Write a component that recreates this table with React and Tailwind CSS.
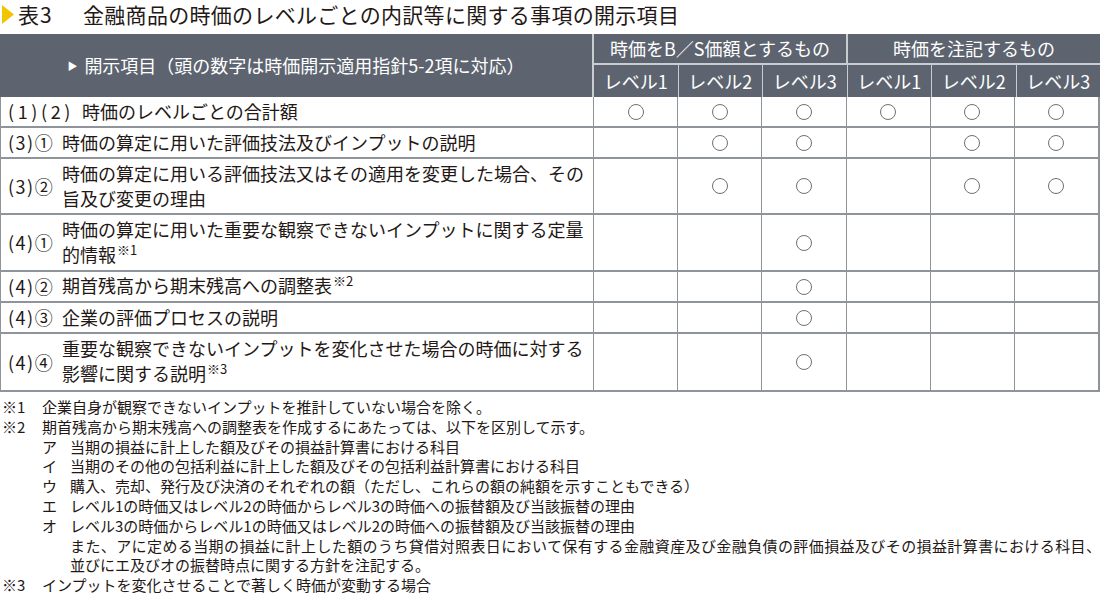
import React from "react";

const FONT = { fontFamily: '"Noto Sans CJK JP", "Noto Sans", sans-serif' };

const Circle = () => (
  <div className="w-[16px] h-[16px] rounded-full border border-[#707070]" />
);

const rows = [
  { p: "(1)(2)", pw: "w-[74px]", tr: "tracking-[3.6px]", lines: ["時価のレベルごとの合計額"], c: [1, 1, 1, 1, 1, 1], h: "h-[31px]" },
  { p: "(3)①", pw: "w-[54px]", tr: "tracking-[1.5px]", lines: ["時価の算定に用いた評価技法及びインプットの説明"], c: [0, 1, 1, 0, 1, 1], h: "h-[31px]" },
  {
    p: "(3)②",
    pw: "w-[54px]",
    tr: "tracking-[1.5px]",
    lines: ["時価の算定に用いる評価技法又はその適用を変更した場合、その", "旨及び変更の理由"],
    c: [0, 1, 1, 0, 1, 1],
    h: "h-[56px]",
  },
  {
    p: "(4)①",
    pw: "w-[54px]",
    tr: "tracking-[1.5px]",
    lines: ["時価の算定に用いた重要な観察できないインプットに関する定量", "的情報"],
    sup: "※1",
    c: [0, 0, 1, 0, 0, 0],
    h: "h-[57px]",
  },
  { p: "(4)②", pw: "w-[54px]", tr: "tracking-[1.5px]", lines: ["期首残高から期末残高への調整表"], sup: "※2", c: [0, 0, 1, 0, 0, 0], h: "h-[31px]" },
  { p: "(4)③", pw: "w-[54px]", tr: "tracking-[1.5px]", lines: ["企業の評価プロセスの説明"], c: [0, 0, 1, 0, 0, 0], h: "h-[31px]" },
  {
    p: "(4)④",
    pw: "w-[54px]",
    tr: "tracking-[1.5px]",
    lines: ["重要な観察できないインプットを変化させた場合の時価に対する", "影響に関する説明"],
    sup: "※3",
    c: [0, 0, 1, 0, 0, 0],
    h: "h-[58px]",
  },
];

const levels = ["レベル1", "レベル2", "レベル3", "レベル1", "レベル2", "レベル3"];

export default function App() {
  return (
    <div className="w-[1100px] h-[595px] bg-white overflow-hidden text-[#231815]" style={FONT}>
      {/* Title */}
      <div className="flex items-center pl-[2px]">
        <svg width="12" height="19" viewBox="0 0 12 19" className="shrink-0">
          <polygon points="0,0 12,9.5 0,19" fill="#f5c400" />
        </svg>
        <span className="ml-[4px] w-[65px] text-[21px] leading-[28px] tracking-[1px]">表3</span>
        <span className="text-[21px] leading-[28px] tracking-[0.3px]">
          金融商品の時価のレベルごとの内訳等に関する事項の開示項目
        </span>
      </div>

      {/* Table */}
      <div className="mt-[6px] w-[1100px]">
        {/* Header */}
        <div className="flex h-[63px] bg-[#5d6470] text-white">
          <div className="w-[594px] shrink-0 flex items-center justify-center border-r-2 border-[#c9ccd1] text-[18px]">
            <span className="text-[10px] mr-[7px]">▶</span>
            <span>開示項目（頭の数字は時価開示適用指針5-2項に対応）</span>
          </div>
          <div className="flex-1 flex flex-col">
            <div className="flex h-[31px] border-b-2 border-[#c9ccd1] text-[18px]">
              <div className="flex-1 flex items-center justify-center border-r-2 border-[#c9ccd1]">
                時価をB／S価額とするもの
              </div>
              <div className="flex-1 flex items-center justify-center">時価を注記するもの</div>
            </div>
            <div className="flex flex-1 text-[18px]">
              {levels.map((l, i) => (
                <div
                  key={i}
                  className={`flex-1 flex items-center justify-center ${i < 5 ? "border-r border-[#c9ccd1]" : ""}`}
                >
                  {l}
                </div>
              ))}
            </div>
          </div>
        </div>

        {/* Body */}
        <div className="border-l border-r-2 border-[#8f949b]">
          {rows.map((r, ri) => (
            <div key={ri} className={`flex ${r.h} border-b-2 border-[#8f949b]`}>
              <div className="w-[593px] shrink-0 flex items-center pl-[7px] border-r border-[#8f949b] text-[18px] leading-[25px]">
                <span className={`shrink-0 self-start mt-auto mb-auto ${r.pw}`}>
                  <span className={r.tr}>{r.p}</span>
                </span>
                <span>
                  {r.lines.map((ln, li) => (
                    <React.Fragment key={li}>
                      {li > 0 && <br />}
                      {ln}
                      {li === r.lines.length - 1 && r.sup && (
                        <span className="text-[13px] relative top-[-7px] ml-[1px]">{r.sup}</span>
                      )}
                    </React.Fragment>
                  ))}
                </span>
              </div>
              {r.c.map((v, ci) => (
                <div
                  key={ci}
                  className={`flex-1 flex items-center justify-center ${ci < 5 ? "border-r border-[#8f949b]" : ""}`}
                >
                  {v ? <Circle /> : null}
                </div>
              ))}
            </div>
          ))}
        </div>
      </div>

      {/* Footnotes */}
      <div className="mt-[5px] text-[15px] leading-[19.8px] whitespace-nowrap">
        <div className="flex">
          <span className="w-[42px] shrink-0 pl-[2px]">※1</span>
          <span>企業自身が観察できないインプットを推計していない場合を除く。</span>
        </div>
        <div className="flex">
          <span className="w-[42px] shrink-0 pl-[2px]">※2</span>
          <span>期首残高から期末残高への調整表を作成するにあたっては、以下を区別して示す。</span>
        </div>
        {[
          ["ア", "当期の損益に計上した額及びその損益計算書における科目"],
          ["イ", "当期のその他の包括利益に計上した額及びその包括利益計算書における科目"],
          ["ウ", "購入、売却、発行及び決済のそれぞれの額（ただし、これらの額の純額を示すこともできる）"],
          ["エ", "レベル1の時価又はレベル2の時価からレベル3の時価への振替額及び当該振替の理由"],
          ["オ", "レベル3の時価からレベル1の時価又はレベル2の時価への振替額及び当該振替の理由"],
        ].map(([m, t]) => (
          <div key={m} className="flex pl-[42px]">
            <span className="w-[28px] shrink-0">{m}</span>
            <span>{t}</span>
          </div>
        ))}
        <div className="pl-[70px] tracking-[0.4px]">
          また、アに定める当期の損益に計上した額のうち貸借対照表日において保有する金融資産及び金融負債の評価損益及びその損益計算書における科目、
        </div>
        <div className="pl-[70px]">並びにエ及びオの振替時点に関する方針を注記する。</div>
        <div className="flex">
          <span className="w-[42px] shrink-0 pl-[2px]">※3</span>
          <span>インプットを変化させることで著しく時価が変動する場合</span>
        </div>
      </div>
    </div>
  );
}
